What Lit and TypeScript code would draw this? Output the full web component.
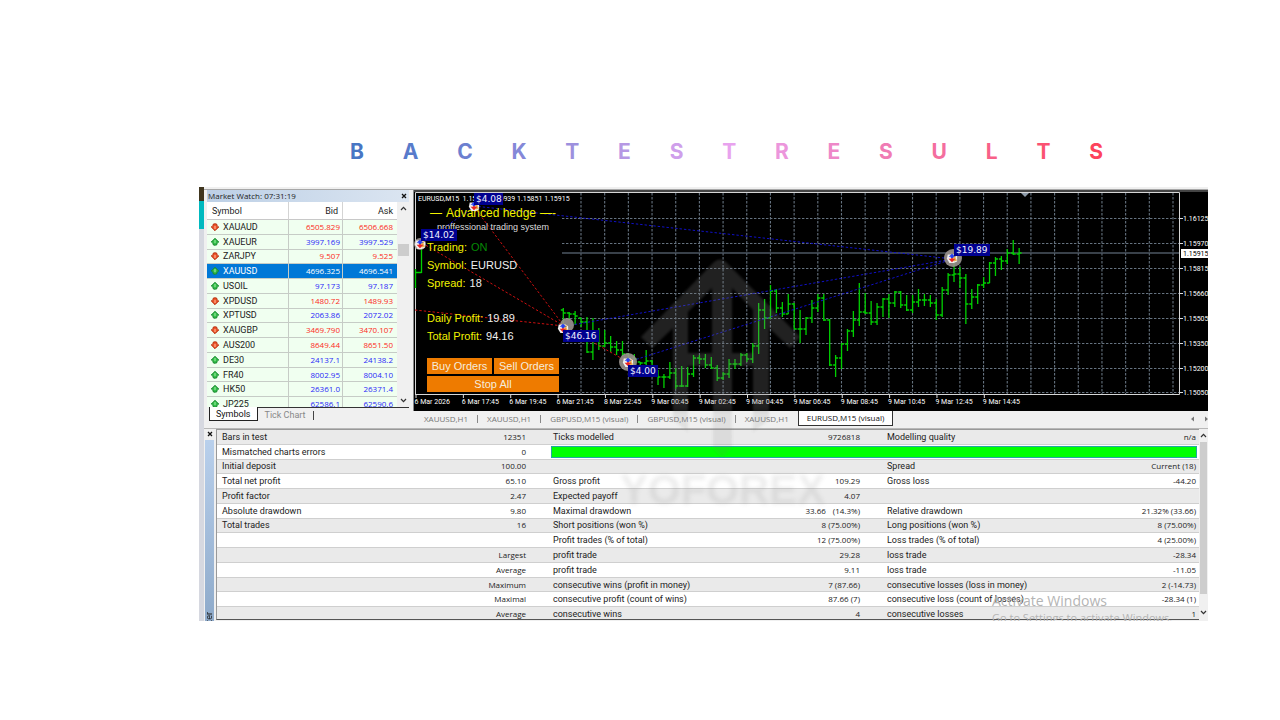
import { LitElement, html, svg, css } from "lit";
import { customElement } from "lit/decorators.js";

const TITLE: [string, string][] = [
  ["B", "#4876c4"], ["A", "#587bcb"], ["C", "#6c80d0"], ["K", "#8488d8"], ["T", "#9d90de"],
  ["E", "#b698e4"], ["S", "#cf9feb"], ["T", "#e8a2ee"], ["R", "#ec96dc"], ["E", "#ee88c8"],
  ["S", "#f07cb4"], ["U", "#f46e9e"], ["L", "#f86088"], ["T", "#fb5272"], ["S", "#fd435c"],
];

const QUOTES: [string, string, string, boolean][] = [
  ["XAUAUD", "6505.829", "6506.668", false],
  ["XAUEUR", "3997.169", "3997.529", true],
  ["ZARJPY", "9.507", "9.525", false],
  ["XAUUSD", "4696.325", "4696.541", true],
  ["USOIL", "97.173", "97.187", true],
  ["XPDUSD", "1480.72", "1489.93", false],
  ["XPTUSD", "2063.86", "2072.02", true],
  ["XAUGBP", "3469.790", "3470.107", false],
  ["AUS200", "8649.44", "8651.50", false],
  ["DE30", "24137.1", "24138.2", true],
  ["FR40", "8002.95", "8004.10", true],
  ["HK50", "26361.0", "26371.4", true],
  ["JP225", "62586.1", "62590.6", true],
];

const REPORT: string[][] = [
  ["Bars in test", "12351", "Ticks modelled", "9726818", "Modelling quality", "n/a"],
  ["Mismatched charts errors", "0"],
  ["Initial deposit", "100.00", "", "", "Spread", "Current (18)"],
  ["Total net profit", "65.10", "Gross profit", "109.29", "Gross loss", "-44.20"],
  ["Profit factor", "2.47", "Expected payoff", "4.07", "", ""],
  ["Absolute drawdown", "9.80", "Maximal drawdown", "33.66", "Relative drawdown", "21.32% (33.66)"],
  ["Total trades", "16", "Short positions (won %)", "8 (75.00%)", "Long positions (won %)", "8 (75.00%)"],
  ["", "", "Profit trades (% of total)", "12 (75.00%)", "Loss trades (% of total)", "4 (25.00%)"],
  ["", "Largest", "profit trade", "29.28", "loss trade", "-28.34"],
  ["", "Average", "profit trade", "9.11", "loss trade", "-11.05"],
  ["", "Maximum", "consecutive wins (profit in money)", "7 (87.66)", "consecutive losses (loss in money)", "2 (-14.73)"],
  ["", "Maximal", "consecutive profit (count of wins)", "87.66 (7)", "consecutive loss (count of losses)", "-28.34 (1)"],
  ["", "Average", "consecutive wins", "4", "consecutive losses", "1"],
];

// high, low, close of every bar, as heights on the chart canvas
const BARS: [number, number, number][] = [
  [308, 325, 313], [312, 320, 314], [311, 325, 316], [318, 327, 322], [317, 353, 352], [318, 360, 334],
  [328, 350, 346], [330, 347, 343], [336, 352, 347], [341, 355, 350], [341, 356, 354], [353, 366, 358],
  [354, 367, 359], [362, 368, 363], [350, 366, 361], [360, 369, 366], [370, 385, 377], [374, 388, 377],
  [362, 379, 373], [368, 389, 386], [366, 387, 386], [367, 387, 374], [355, 377, 358], [355, 364, 359],
  [354, 368, 365], [357, 369, 368], [365, 381, 378], [372, 380, 374], [359, 378, 364], [359, 369, 364],
  [353, 366, 355], [353, 362, 359], [343, 363, 346], [303, 354, 310], [299, 329, 318], [285, 319, 291],
  [289, 313, 308], [302, 317, 314], [294, 314, 304], [303, 329, 329], [310, 343, 329], [317, 335, 318],
  [300, 323, 308], [294, 312, 298], [294, 321, 320], [319, 366, 365], [355, 377, 358], [343, 369, 344],
  [329, 351, 331], [311, 337, 320], [283, 326, 312], [293, 314, 313], [301, 325, 322], [303, 325, 307],
  [298, 317, 299], [294, 318, 303], [291, 307, 292], [291, 308, 305], [295, 311, 310], [295, 313, 302],
  [289, 307, 300], [294, 306, 300], [295, 307, 303], [299, 320, 315], [287, 317, 290], [273, 295, 275],
  [262, 282, 274], [267, 288, 278], [274, 324, 304], [289, 309, 297], [284, 304, 285], [277, 288, 283],
  [262, 283, 263], [257, 276, 259], [256, 270, 261], [249, 264, 253], [240, 255, 254], [248, 264, 253],
];

const LEVELS: [string, number][] = [
  ["1.16125", 218], ["1.15970", 243], ["1.15815", 268], ["1.15660", 293],
  ["1.15505", 318], ["1.15350", 343], ["1.15200", 368], ["1.15050", 392],
];

const TIMES: string[] = [
  "6 Mar 2026", "6 Mar 17:45", "6 Mar 19:45", "6 Mar 21:45", "8 Mar 22:45", "9 Mar 00:45", "9 Mar 02:45",
  "9 Mar 04:45", "9 Mar 06:45", "9 Mar 08:45", "9 Mar 10:45", "9 Mar 12:45", "9 Mar 14:45",
];

const CHART_TABS = ["XAUUSD,H1", "XAUUSD,H1", "GBPUSD,M15 (visual)", "GBPUSD,M15 (visual)", "XAUUSD,H1", "EURUSD,M15 (visual)"];

@customElement("market-watch")
export class MarketWatch extends LitElement {
  static styles = css`
    :host { display: flex; flex-direction: column; width: 202px; padding: 0 4px 0 3px; font: 9px/14px Roboto, sans-serif; color: #222; background: #f0f0f0; }
    .caption { display: flex; justify-content: space-between; align-items: center; height: 12px; padding: 0 2px 0 1px; font: 8px/12px "Open Sans", sans-serif; background: linear-gradient(90deg, #bdd0e6, #dbe5f1); }
    .list { display: flex; height: 205px; overflow: hidden; background: #fff; }
    table { flex: 1; height: 210px; border-collapse: separate; border-spacing: 0; table-layout: fixed; }
    th { height: 17px; font-weight: 400; padding: 0 4px 0 0; text-align: right; background: #fff; border-bottom: 1px solid #c8c8c8; border-right: 1px solid #d4d4d4; }
    th:first-child { text-align: left; padding-left: 5px; }
    td { padding: 0 2px 0 0; font: 8px/12px "Open Sans", sans-serif; text-align: right; background: #f0fff0; border-bottom: 1px solid #c6ccc6; border-right: 1px solid #c6ccc6; color: #fd2a22; }
    td:last-child, th:last-child { border-right: 0; padding-right: 4px; }
    td.name { font: 9px/12px Roboto, sans-serif; color: #222; text-align: left; padding-left: 4px; }
    .up td { color: #2a2af8; }
    .up td.name { color: #222; }
    .picked td, .picked td.name { background: #0078d7; color: #fff; }
    .name-col { width: 82px; }
    .bid-col { width: 54px; }
    .tag { display: flex; align-items: center; gap: 4px; }
    .scroll { display: flex; flex-direction: column; align-items: center; width: 12px; background: #f0f0f0; }
    .scroll svg { margin: 4px 0; }
    .thumb { width: 11px; height: 12px; margin-top: 29px; margin-bottom: auto; background: #cdcdcd; }
    .tabs { display: flex; height: 14px; }
    button { all: unset; box-sizing: border-box; padding: 0 7px; color: #888; border-top: 1px solid #333; }
    .tabs button.on { margin-left: 2px; padding: 0 6px; color: #111; background: #fff; border: 1px solid #222; border-top: 0; }
    .caption .close { display: flex; padding: 0; border: 0; }
    .rest { flex: 1; border-top: 1px solid #333; }
    .bar { display: block; width: 1px; height: 9px; margin-top: 3px; background: #444; }
  `;

  private arrow(up: boolean) {
    const edge = up ? "#178a2c" : "#b83210";
    const fill = up ? "#35c04c" : "#f0562c";
    return html`<svg width="8" height="8" viewBox="0 0 8 8">
      <path d=${up ? "M4 0.4 7.6 4H5.8V7H2.200V4H0.400Z" : "M4 7.6 7.6 4H5.8V1H2.200V4H0.400Z"} fill=${fill} stroke=${edge} stroke-width=".8" />
      <path d="M0.400 4 4 0.400 7.600 4 4 7.600Z" fill=${fill} fill-opacity=".6" stroke=${edge} stroke-width=".7" />
      <path d=${up ? "M4 2V5" : "M4 3V6"} stroke=${up ? "#9df09d" : "#ffc0a0"} stroke-width="1" />
    </svg>`;
  }

  render() {
    return html`
      <div class="caption"><span>Market Watch: 07:31:19</span>
        <button class="close" aria-label="Close"><svg width="6" height="6" viewBox="0 0 6 6"><path d="M1 1 5 5M5 1 1 5" stroke="#111" stroke-width="1.3" /></svg></button>
      </div>
      <div class="list">
        <table>
          <colgroup><col class="name-col" /><col class="bid-col" /><col /></colgroup>
          <thead><tr><th>Symbol</th><th>Bid</th><th>Ask</th></tr></thead>
          <tbody>
            ${QUOTES.map(([s, bid, ask, up]) => html`<tr class="${up ? "up" : "down"} ${s === "XAUUSD" ? "picked" : ""}">
              <td class="name"><span class="tag">${this.arrow(up)}${s}</span></td><td>${bid}</td><td>${ask}</td></tr>`)}
          </tbody>
        </table>
        <div class="scroll">
          <svg width="7" height="5" viewBox="0 0 7 5"><path d="M1 4 3.5 1.3 6 4" fill="none" stroke="#333" stroke-width="1.2" /></svg>
          <div class="thumb"></div>
          <svg width="7" height="5" viewBox="0 0 7 5"><path d="M1 1 3.5 3.7 6 1" fill="none" stroke="#333" stroke-width="1.2" /></svg>
        </div>
      </div>
      <div class="tabs"><button class="on">Symbols</button><button>Tick Chart</button><div class="rest"><i class="bar"></i></div></div>
    `;
  }
}

@customElement("price-chart")
export class PriceChart extends LitElement {
  static styles = css`
    :host { display: block; flex: 1; min-width: 0; background: #f0f0f0; }
    .canvas { position: relative; background: #000; }
    .plot { display: block; width: 100%; }
    .over { position: absolute; inset: 0; pointer-events: none; }
    .axis { font: 7px Roboto, sans-serif; fill: #fff; }
    .current { fill: #000; }
    .money { font: 9px "DejaVu Sans", sans-serif; fill: #f0f0ff; }
    .panel { position: absolute; top: 15px; left: 14px; width: 132px; font: 11px/18px "Liberation Sans", Arial, sans-serif; color: #f2f200; }
    .name { display: flex; justify-content: center; gap: 4px; font-size: 12px; line-height: 16px; white-space: nowrap; }
    .sub { font-size: 9px; line-height: 12px; text-align: center; color: #ddd; white-space: nowrap; }
    dl { display: grid; gap: 0; margin: 5px 0 13px; }
    dl div { display: flex; gap: 4px; }
    dl .gap { margin-top: 17px; }
    dt, dd { margin: 0; }
    dd { color: #f0f0f0; }
    dd.on { color: #058a05; }
    .actions { display: grid; grid-template-columns: 1fr 1fr; gap: 2px; }
    .actions button { all: unset; height: 16px; line-height: 16px; font-size: 11px; text-align: center; color: #f6ecdc; background: #ee7b00; }
    .actions .wide { grid-column: 1 / 3; }
    .tabs { display: flex; align-items: center; height: 15px; font: 8px/14px "Open Sans", sans-serif; color: #777; padding-left: 2px; }
    .tabs button { all: unset; padding: 0 9px; white-space: nowrap; }
    .tabs .on { box-sizing: border-box; height: 15px; padding: 0 8px; border: 1px solid #333; border-top: 0; background: #fff; color: #111; }
    .sep { width: 1px; height: 8px; background: #888; }
    .arrows { margin-left: auto; }
  `;

  private tag(x: number, y: number, w: number, text: string) {
    return svg`<rect x=${x} y=${y} width=${w} height="12" fill="#00008f" /><text class="money" x=${x + 2} y=${y + 9}>${text}</text>`;
  }

  private marker(x: number, y: number, r: number, dx = 0, dy = 0) {
    return svg`<circle cx=${x + dx} cy=${y + dy} r=${r} fill="#9b948f" opacity=".9" />
      <g transform="translate(${x} ${y}) scale(.85)">
        <path d="M-5 -4H3L6 -2V4L2 6H-3L-6 1Z" fill="#f1efee" />
        <path d="M1 -3 5 -3 4 0 6 3 2 4Z" fill="#e8b04a" />
        <path d="M-4 -1.5 0 -5 4 -1.5H1.500V0H-1.500V-1.500Z" fill="#2440f0" />
        <path d="M-4 1H-1V0H1V1H4L0 5Z" fill="#ea2424" />
      </g>`;
  }

  render() {
    const pitch = 5.92;
    const grid = Array.from({ length: 26 }, (_, i) => 581 + i * 23.68);
    return html`
      <div class="canvas">
        <svg class="plot" viewBox="413 190 795 221">
          <g stroke="#65727f" stroke-width="1.1" stroke-dasharray="2.4 1.6">
            ${grid.map((x) => svg`<line x1=${x} x2=${x} y1="193" y2="394" />`)}
            ${LEVELS.map(([, y]) => svg`<line x1="562" x2="1179" y1=${y + 0.5} y2=${y + 0.5} />`)}
          </g>
          <line x1="562" x2="1179" y1="253" y2="253" stroke="#4c5763" stroke-width="1.4" />
          <path d="M413 191H1208M413.500 190V411" stroke="#888" stroke-width="1" />
          <path d="M415.5 394.5V192.500H1179.500V394.500H415" fill="none" stroke="#d6d6d6" />
          <path d="M1021 193H1029L1025 197Z" fill="#8d9aa8" />
          <g stroke="#00d000" stroke-width="1.3">
            ${BARS.map(([hi, lo, close], i) => {
              const x = 563.3 + i * pitch;
              const open = i ? BARS[i - 1][2] : 310;
              return svg`<path d="M${x} ${hi}V${lo}M${x} ${close}h2.500M${x} ${Math.min(lo, Math.max(hi, open))}h-2.500" />`;
            })}
            <path d="M415.500 269V288M421.500 241V273M416 272.500H421.500" />
          </g>
          <g stroke-dasharray="2.4 2" fill="none">
            <path stroke="#1010c8" d="M474 206 953 259M566 326 953 259M628 362 953 259M422 243 474 207" />
            <path stroke="#cc1010" d="M474 207 564 326M422 243 564 326M415 310 564 326M564 326 628 362" />
          </g>
          <g class="axis">
            <text x="418" y="201">EURUSD,M15&#160; 1.15923 1.15939 1.15851 1.15915</text>
            ${LEVELS.map(([t, y]) => svg`<path d="M1180 ${y + 0.5}h3" stroke="#ddd" /><text x="1183" y=${y + 3}>${t}</text>`)}
            ${TIMES.map((t, i) => svg`<path d="M${416 + i * 47.36} 395v3" stroke="#ddd" /><text x=${414.5 + i * 47.36} y="404">${t}</text>`)}
          </g>
          <rect x="1181" y="249" width="27" height="9" fill="#fff" />
          <g class="axis"><text class="current" x="1183" y="256">1.15915</text></g>
        </svg>
        <div class="panel">
          <div class="name"><span>—</span><span>Advanced hedge</span><span>—-</span></div>
          <div class="sub">proffessional trading system</div>
          <dl>
            <div><dt>Trading:</dt><dd class="on">ON</dd></div>
            <div><dt>Symbol:</dt><dd>EURUSD</dd></div>
            <div><dt>Spread:</dt><dd>18</dd></div>
            <div class="gap"><dt>Daily Profit:</dt><dd>19.89</dd></div>
            <div><dt>Total Profit:</dt><dd>94.16</dd></div>
          </dl>
          <div class="actions"><button>Buy Orders</button><button>Sell Orders</button><button class="wide">Stop All</button></div>
        </div>
        <svg class="plot over" viewBox="413 190 795 221">
          ${this.marker(474, 206, 0)}
          ${this.marker(420, 244, 6)}
          ${this.marker(563, 328, 7, 4, -3)}
          ${this.marker(628, 362, 9)}
          ${this.marker(952, 258, 9, 1)}
          ${this.tag(474, 193, 29, "$4.08")}
          ${this.tag(421, 229, 36, "$14.02")}
          ${this.tag(563, 330, 36, "$46.16")}
          ${this.tag(628, 365, 30, "$4.00")}
          ${this.tag(954, 244, 36, "$19.89")}
        </svg>
      </div>
      <div class="tabs">
        ${CHART_TABS.map((t, i) => html`<button class=${i === 5 ? "on" : ""}>${t}</button>${i < 4 ? html`<i class="sep"></i>` : ""}`)}
        <svg class="arrows" width="20" height="8" viewBox="0 0 20 8"><path d="M6 1.500V6.500L3 4ZM17 1.500V6.500L20 4Z" fill="#777" /></svg>
      </div>
    `;
  }
}

@customElement("test-report")
export class TestReport extends LitElement {
  static styles = css`
    :host { display: flex; height: 192px; overflow: hidden; background: #f0f0f0; font: 9px/12px Roboto, sans-serif; color: #222; }
    .side { display: flex; flex-direction: column; width: 12px; }
    .close { all: unset; display: flex; justify-content: center; height: 9px; padding-top: 2px; }
    .strip { flex: 1; margin: 0 2px 0 1px; background: linear-gradient(#b9d0ec, #8eaaca); display: flex; align-items: flex-end; justify-content: center; }
    .strip span { writing-mode: vertical-rl; transform: rotate(180deg); margin-bottom: -16px; line-height: 9px; }
    .body { flex: 1; min-width: 0; height: 191px; overflow: hidden; border-left: 1px solid #999; border-top: 1px solid #999; box-sizing: border-box; border-bottom: 1px solid #555; }
    table { width: 100%; height: 192px; table-layout: fixed; border-collapse: separate; border-spacing: 0; }
    td { padding: 0; white-space: nowrap; border-bottom: 1px solid #cfcfcf; }
    tr:nth-child(odd) td { background: #eaeaea; }
    tr:nth-child(even) td { background: #fff; }
    td:nth-child(even) { text-align: right; font: 8px/12px "Open Sans", sans-serif; }
    td:nth-child(1) { padding-left: 5px; }
    td:nth-child(3), td:nth-child(5) { padding-left: 27px; }
    td:nth-child(6) { padding-right: 3px; }
    td.quality { padding: 0 2px 0 25px; }
    .fill { height: 12px; box-sizing: border-box; border: 1px solid #22a8a0; background: #00ff00; }
    .c1 { width: 184px; } .c2 { width: 125px; } .c3 { width: 174px; } .c4 { width: 160px; } .c5 { width: 190px; } .c6 { width: 149px; }
    .pct { margin-left: 7px; }
    .scroll { display: flex; flex-direction: column; align-items: center; gap: 4px; width: 9px; padding: 4px 0; box-sizing: border-box; }
    .thumb { width: 7px; height: 152px; margin-bottom: 12px; background: #cdcdcd; }
  `;

  render() {
    return html`
      <div class="side">
        <button class="close" aria-label="Close"><svg width="6" height="6" viewBox="0 0 6 6"><path d="M1 1 5 5M5 1 1 5" stroke="#111" stroke-width="1.3" /></svg></button>
        <div class="strip"><span>Tester</span></div>
      </div>
      <div class="body"><table>
        <colgroup>${[1, 2, 3, 4, 5, 6].map((n) => html`<col class="c${n}" />`)}</colgroup>
        <tbody>${REPORT.map((r, i) => r.length === 2
          ? html`<tr><td>${r[0]}</td><td>${r[1]}</td><td class="quality" colspan="4"><div class="fill"></div></td></tr>`
          : html`<tr>${r.map((c, j) => html`<td>${c}${i === 5 && j === 3 ? html`<span class="pct">(14.3%)</span>` : ""}</td>`)}</tr>`)}
        </tbody>
      </table></div>
      <div class="scroll">
        <svg width="7" height="5" viewBox="0 0 7 5"><path d="M1 4 3.500 1.300 6 4" fill="none" stroke="#333" stroke-width="1.2" /></svg>
        <div class="thumb"></div>
        <svg width="7" height="5" viewBox="0 0 7 5"><path d="M1 1 3.500 3.700 6 1" fill="none" stroke="#333" stroke-width="1.2" /></svg>
      </div>
    `;
  }
}

@customElement("app-root")
export class AppRoot extends LitElement {
  static styles = css`
    :host { display: block; min-height: 100vh; background: #fff; }
    h1 { display: flex; justify-content: space-between; margin: 0; padding: 138px 177px 0 350px; font: 700 21px/28px Inter, sans-serif; }
    .shot { position: relative; display: flex; margin: 21px 72px 0 199px; overflow: hidden; }
    .edge { width: 5px; background: linear-gradient(#40361f 14px, #00b9bf 14px 42px, #d6d8e0 42px); }
    .app { flex: 1; min-width: 0; background: #f0f0f0; }
    .top { height: 3px; box-sizing: border-box; border-bottom: 1px solid #a8a8a8; }
    .upper { display: flex; }
    .split { height: 3px; box-sizing: border-box; border-bottom: 1px solid #b8b8b8; }
    .mark { position: absolute; inset: 0; width: 100%; pointer-events: none; }
    .brand { font: 700 42px "Liberation Sans", sans-serif; fill: #777; }
    .notice { position: absolute; right: 42px; bottom: -4px; width: 174px; font: 11px/14px "Open Sans", sans-serif; color: #b4b4b4; white-space: nowrap; }
    .notice strong { display: block; font-weight: 400; font-size: 14px; line-height: 20px; }
  `;

  render() {
    return html`
      <h1>${TITLE.map(([c, color]) => html`<span style="color:${color}">${c}</span>`)}</h1>
      <div class="shot">
        <div class="edge"></div>
        <div class="app">
          <div class="top"></div>
          <div class="upper"><market-watch></market-watch><price-chart></price-chart></div>
          <div class="split"></div>
          <test-report></test-report>
        </div>
        <svg class="mark" viewBox="199 187 1009 434">
          <defs>
            <filter id="soft"><feGaussianBlur stdDeviation="1" /></filter>
            <filter id="haze"><feGaussianBlur stdDeviation="2" /></filter>
            <linearGradient id="fade" gradientUnits="userSpaceOnUse" x1="0" y1="260" x2="0" y2="460">
              <stop offset=".74" stop-color="#777" stop-opacity=".27" />
              <stop offset=".77" stop-color="#777" stop-opacity=".12" />
              <stop offset="1" stop-color="#777" stop-opacity=".12" />
            </linearGradient>
          </defs>
          <path d="M641 337 714 262Q720 257 726 262L800 337 790 348 769 328V420L753 432V366H732V448L722 457 713 448V366H688V432L673 420V328L652 348ZM688 312V353H712V288ZM732 288V353H753V310Z" fill="url(#fade)" fill-rule="evenodd" filter="url(#soft)" />
          <text class="brand" x="620" y="504" opacity=".13" filter="url(#haze)">YOFOREX</text>
        </svg>
        <div class="notice"><strong>Activate Windows</strong>Go to Settings to activate Windows.</div>
      </div>
    `;
  }
}
